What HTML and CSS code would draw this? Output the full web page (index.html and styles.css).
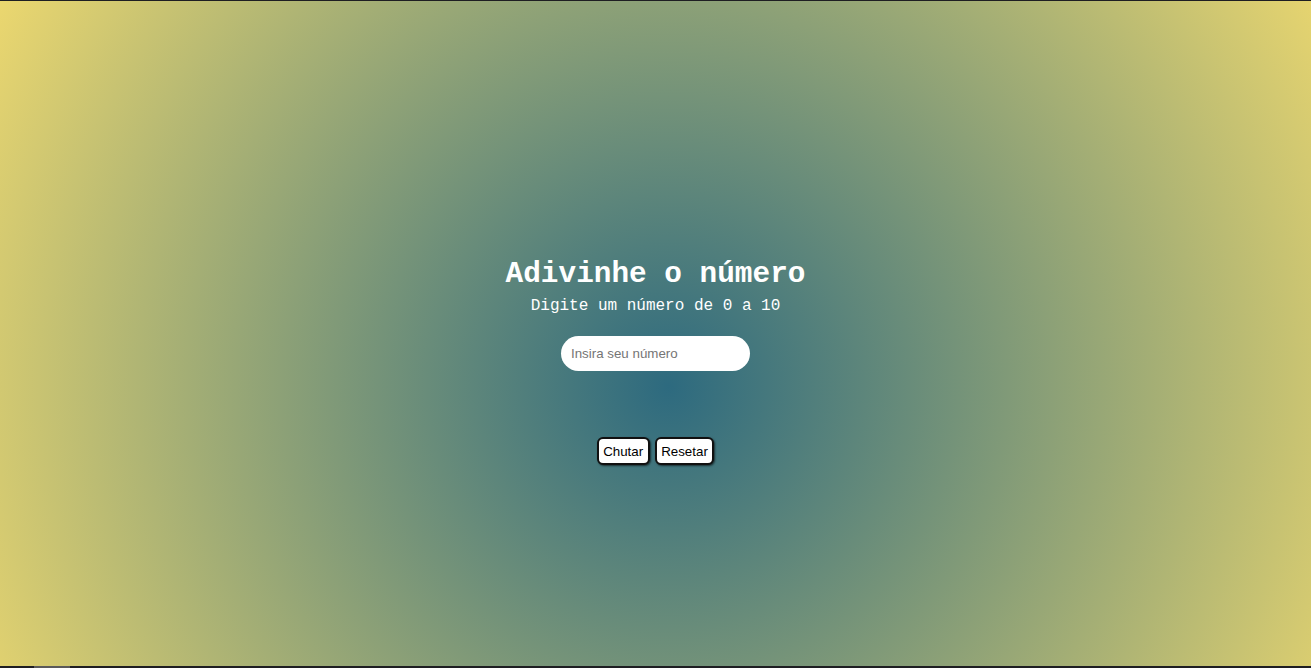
FILE: index.html
```html
<!DOCTYPE html>
<html lang="pt-BR">
<head>
<meta charset="utf-8">
<title>Adivinhe o número</title>
<link rel="stylesheet" href="styles.css">
</head>
<body>
<div class="frame">
  <main class="game">
    <h1 class="title">Adivinhe o número</h1>
    <p class="subtitle">Digite um número de 0 a 10</p>
    <input class="guess" type="text" placeholder="Insira seu número">
    <div class="actions">
      <button class="btn">Chutar</button>
      <button class="btn">Resetar</button>
    </div>
  </main>
  <div class="scroll-thumb"></div>
</div>
</body>
</html>
```

FILE: styles.css
```css
html, body {
  margin: 0;
  padding: 0;
  height: 100%;
  overflow: hidden;
}
.frame {
  position: relative;
  box-sizing: border-box;
  height: 100vh;
  border-top: 1px solid #1e1e22;
  border-bottom: 2px solid #1e1e22;
  background: radial-gradient(circle at 51% 58%, #2d6a7f 0%, #ebd76f 100%);
}
.scroll-thumb {
  position: absolute;
  left: 34px;
  bottom: -2px;
  width: 36px;
  height: 2px;
  background: #5a5a5a;
}
.game {
  display: flex;
  flex-direction: column;
  align-items: center;
  padding-top: 257px;
}
.title {
  margin: 0;
  font-family: "Liberation Mono", "Courier New", monospace;
  font-weight: bold;
  font-size: 29.4px;
  line-height: 34px;
  color: #ffffff;
}
.subtitle {
  margin: 5px 0 0;
  font-family: "Liberation Mono", "Courier New", monospace;
  font-size: 16px;
  line-height: 18px;
  color: #ffffff;
}
.guess {
  margin-top: 21px;
  box-sizing: border-box;
  width: 189px;
  height: 35px;
  border: none;
  border-radius: 18px;
  padding: 0 10px;
  background: #ffffff;
  font-family: "Liberation Sans", Arial, sans-serif;
  font-size: 13.33px;
  outline: none;
}
.guess::placeholder {
  color: #757575;
}
.actions {
  margin-top: 66px;
  display: flex;
  gap: 5px;
}
.btn {
  box-sizing: border-box;
  height: 28px;
  padding: 0 4.5px;
  border: 2px solid #111;
  border-radius: 6px;
  background: #ffffff;
  box-shadow: 1px 1px 2px rgba(0,0,0,0.6);
  font-family: "Liberation Sans", Arial, sans-serif;
  font-size: 13.33px;
  color: #000;
  cursor: pointer;
}
```
